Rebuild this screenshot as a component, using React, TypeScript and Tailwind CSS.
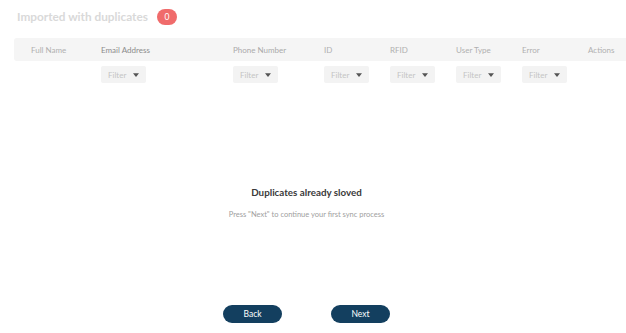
const COLUMNS = [
  { label: "Full Name", filter: false, cls: "text-[#b0b0b0] pl-[17px]" },
  { label: "Email Address", filter: true, cls: "text-[#8c8c8c]" },
  { label: "Phone Number", filter: true, cls: "text-[#aaaaaa]" },
  { label: "ID", filter: true, cls: "text-[#b0b0b0]" },
  { label: "RFID", filter: true, cls: "text-[#b0b0b0]" },
  { label: "User Type", filter: true, cls: "text-[#b0b0b0]" },
  { label: "Error", filter: true, cls: "text-[#b0b0b0]" },
  { label: "Actions", filter: false, cls: "text-[#b0b0b0]" },
];

const GRID = "grid grid-cols-[87px_132px_91px_66px_66px_66px_66px_1fr]";

function Caret() {
  return (
    <svg viewBox="0 0 8 5" className="w-[6px] h-[4px] text-[#555]" fill="currentColor">
      <path d="M0 0h8L4 5z" />
    </svg>
  );
}

function FilterBox() {
  return (
    <div className="w-[45px] h-[17px] bg-[#f3f3f3] rounded-[2px] flex items-center pl-[7px] pr-[7px] justify-between">
      <span className="text-[8px] text-[#c4c4c4]">Filter</span>
      <Caret />
    </div>
  );
}

export default function App() {
  return (
    <div className="w-[626px] h-[333px] bg-white flex flex-col overflow-hidden" style={{ fontFamily: "Lato, 'Liberation Sans', sans-serif" }}>
      <div className="flex items-center gap-[9px] pl-[17px] pt-[9px] h-[25px]">
        <h1 className="text-[11.8px] font-bold text-[#d9d9d9]">Imported with duplicates</h1>
        <span className="w-[20px] h-[16px] rounded-full bg-[#f06b6b] text-white text-[8.5px] flex items-center justify-center">0</span>
      </div>

      <div className="pl-[14px] mt-[13px]">
        <div className={`${GRID} h-[23px] items-center bg-[#f5f5f5] rounded-l-[3px] text-[8px]`}>
          {COLUMNS.map((c) => (
            <div key={c.label} className={c.cls}>{c.label}</div>
          ))}
        </div>
        <div className={`${GRID} mt-[5px]`}>
          {COLUMNS.map((c) => (
            <div key={c.label}>{c.filter && <FilterBox />}</div>
          ))}
        </div>
      </div>

      <div className="flex flex-col items-center mt-[102px] pr-[13px]">
        <div className="text-[9.8px] font-bold text-[#3a3a3a]">Duplicates already sloved</div>
        <div className="text-[7.5px] text-[#a0a0a0] mt-[9px]">Press "Next" to continue your first sync process</div>
      </div>

      <div className="flex justify-center gap-[49px] mt-[85px] pr-[13px]">
        <button className="w-[59px] h-[18px] rounded-full bg-[#133f5f] text-white text-[8.5px]">Back</button>
        <button className="w-[59px] h-[18px] rounded-full bg-[#133f5f] text-white text-[8.5px]">Next</button>
      </div>
    </div>
  );
}
